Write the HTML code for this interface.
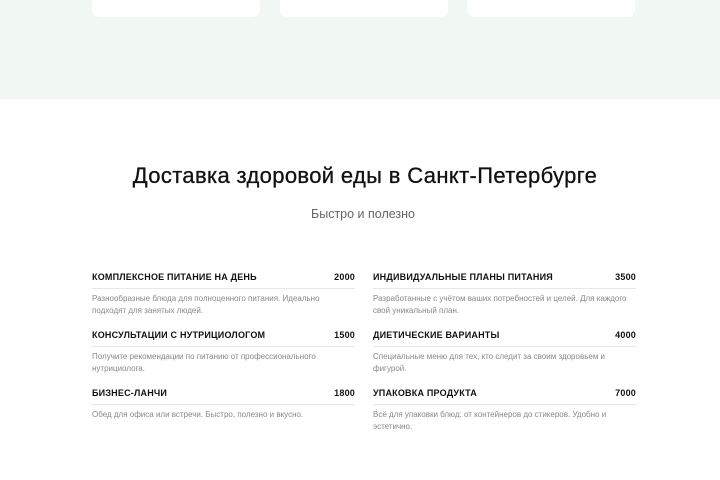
<!DOCTYPE html>
<html><head><meta charset="utf-8"><style>
body{margin:0;width:720px;height:480px;background:#fff;font-family:"Liberation Sans",sans-serif;overflow:hidden;position:relative}
.top{position:absolute;left:0;top:0;width:720px;height:99px;background:#f1f8f4}
.card{position:absolute;top:-20px;height:37px;width:168px;background:#fff;border-radius:8px}
h1{position:absolute;top:163px;left:5px;width:720px;text-align:center;margin:0;font-size:22px;font-weight:normal;color:#111;letter-spacing:0.35px;-webkit-text-stroke:0.3px #111}
.sub{position:absolute;top:207px;left:3px;width:720px;text-align:center;font-size:12.5px;color:#666}
.item{position:absolute;width:263px}
.hd{display:flex;justify-content:space-between;font-size:9px;font-weight:bold;color:#111;letter-spacing:0.2px;padding-bottom:5px;border-bottom:1px solid #e8e8e8;height:11px}
.ds{font-size:8px;color:#888;line-height:12px;margin-top:4px}
</style></head><body>
<div class="top">
<div class="card" style="left:92px"></div>
<div class="card" style="left:280px"></div>
<div class="card" style="left:467px"></div>
</div>
<h1>Доставка здоровой еды в Санкт-Петербурге</h1>
<div class="sub">Быстро и полезно</div>
<div class="item" style="left:92px;top:272px"><div class="hd"><span>КОМПЛЕКСНОЕ ПИТАНИЕ НА ДЕНЬ</span><span>2000</span></div><div class="ds">Разнообразные блюда для полноценного питания. Идеально подходят для занятых людей.</div></div>
<div class="item" style="left:373px;top:272px"><div class="hd"><span>ИНДИВИДУАЛЬНЫЕ ПЛАНЫ ПИТАНИЯ</span><span>3500</span></div><div class="ds">Разработанные с учётом ваших потребностей и целей. Для каждого свой уникальный план.</div></div>
<div class="item" style="left:92px;top:330px"><div class="hd"><span>КОНСУЛЬТАЦИИ С НУТРИЦИОЛОГОМ</span><span>1500</span></div><div class="ds">Получите рекомендации по питанию от профессионального нутрициолога.</div></div>
<div class="item" style="left:373px;top:330px"><div class="hd"><span>ДИЕТИЧЕСКИЕ ВАРИАНТЫ</span><span>4000</span></div><div class="ds">Специальные меню для тех, кто следит за своим здоровьем и фигурой.</div></div>
<div class="item" style="left:92px;top:388px"><div class="hd"><span>БИЗНЕС-ЛАНЧИ</span><span>1800</span></div><div class="ds">Обед для офиса или встречи. Быстро, полезно и вкусно.</div></div>
<div class="item" style="left:373px;top:388px"><div class="hd"><span>УПАКОВКА ПРОДУКТА</span><span>7000</span></div><div class="ds">Всё для упаковки блюд: от контейнеров до стикеров. Удобно и эстетично.</div></div>
</body></html>
